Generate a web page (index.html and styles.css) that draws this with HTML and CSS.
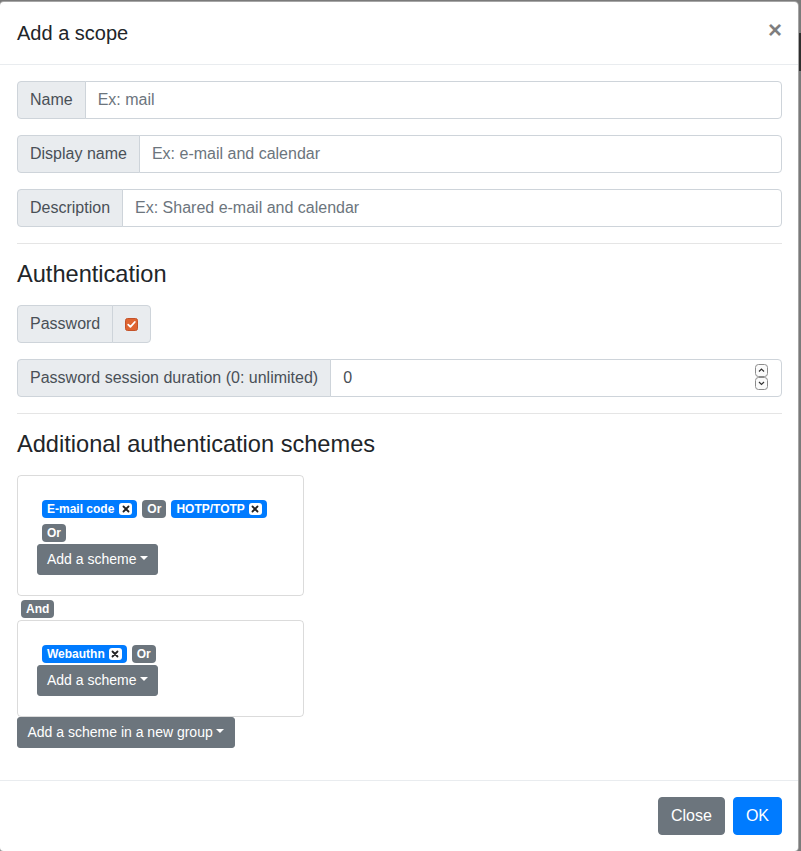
FILE: index.html
```html
<!DOCTYPE html>
<html lang="en">
<head>
<meta charset="utf-8">
<title>Add a scope</title>
<link rel="stylesheet" href="styles.css">
</head>
<body>
<div class="underlay-bar"></div>
<div class="modal">
  <div class="modal-header">
    <h5 class="modal-title">Add a scope</h5>
    <button class="close" type="button">×</button>
  </div>
  <div class="modal-body">
    <div class="input-group">
      <span class="addon">Name</span>
      <input class="form-control" placeholder="Ex: mail">
    </div>
    <div class="input-group">
      <span class="addon">Display name</span>
      <input class="form-control" placeholder="Ex: e-mail and calendar">
    </div>
    <div class="input-group">
      <span class="addon">Description</span>
      <input class="form-control" placeholder="Ex: Shared e-mail and calendar">
    </div>
    <hr>
    <h4 class="section-title">Authentication</h4>
    <div class="input-group">
      <span class="addon">Password</span>
      <span class="addon addon-check">
        <svg class="checkbox" width="13" height="13" viewBox="0 0 13 13"><rect x="0.5" y="0.5" width="12" height="12" rx="2" fill="#df6431" stroke="#c4532a"/><path d="M3.2 6.6 L5.4 8.8 L9.8 4" fill="none" stroke="#fff" stroke-width="1.8" stroke-linecap="round" stroke-linejoin="round"/></svg>
      </span>
    </div>
    <div class="input-group">
      <span class="addon">Password session duration (0: unlimited)</span>
      <div class="num-wrap">
        <input class="form-control num" value="0">
        <svg class="spinner" width="14" height="27" viewBox="0 0 14 27"><rect x="0.5" y="0.5" width="12" height="12" rx="3" fill="#fbfbfb" stroke="#8c8c8c"/><path d="M4 7.5 L6.5 5 L9 7.5" fill="none" stroke="#333" stroke-width="1.2"/><rect x="0.5" y="13.5" width="12" height="12" rx="3" fill="#fbfbfb" stroke="#8c8c8c"/><path d="M4 18 L6.5 20.5 L9 18" fill="none" stroke="#333" stroke-width="1.2"/></svg>
      </div>
    </div>
    <hr>
    <h4 class="section-title">Additional authentication schemes</h4>
    <div class="schemes">
      <div class="scheme-group">
        <div class="badges">
          <span class="badge badge-primary badge-wide">E-mail code <span class="badge-x"><svg width="8" height="8" viewBox="0 0 8 8"><path d="M1.5 1.5 L6.5 6.5 M6.5 1.5 L1.5 6.5" stroke="#222" stroke-width="1.8" stroke-linecap="round"/></svg></span></span>
          <span class="badge badge-secondary">Or</span>
          <span class="badge badge-primary">HOTP/TOTP <span class="badge-x"><svg width="8" height="8" viewBox="0 0 8 8"><path d="M1.5 1.5 L6.5 6.5 M6.5 1.5 L1.5 6.5" stroke="#222" stroke-width="1.8" stroke-linecap="round"/></svg></span></span>
          <span class="badge badge-secondary">Or</span>
        </div>
        <button class="btn btn-sm btn-secondary dropdown-toggle" type="button">Add a scheme</button>
      </div>
      <span class="badge badge-secondary and-badge">And</span>
      <div class="scheme-group">
        <div class="badges">
          <span class="badge badge-primary">Webauthn <span class="badge-x"><svg width="8" height="8" viewBox="0 0 8 8"><path d="M1.5 1.5 L6.5 6.5 M6.5 1.5 L1.5 6.5" stroke="#222" stroke-width="1.8" stroke-linecap="round"/></svg></span></span>
          <span class="badge badge-secondary">Or</span>
        </div>
        <button class="btn btn-sm btn-secondary dropdown-toggle" type="button">Add a scheme</button>
      </div>
      <button class="btn btn-sm btn-secondary dropdown-toggle new-group" type="button">Add a scheme in a new group</button>
    </div>
  </div>
  <div class="modal-footer">
    <button class="btn btn-secondary" type="button">Close</button>
    <button class="btn btn-primary" type="button">OK</button>
  </div>
</div>
</body>
</html>
```
FILE: styles.css
```css
* { box-sizing: border-box; }
html, body { margin: 0; padding: 0; }
body {
  background: #7a7a7a;
  font-family: "Liberation Sans", Arial, sans-serif;
  font-size: 16px;
  line-height: 1.5;
  color: #212529;
  overflow: hidden;
  height: 851px;
  position: relative;
}
.underlay-bar {
  position: absolute;
  right: 0;
  top: 33px;
  width: 10px;
  height: 38px;
  background: #2e2e2e;
}
.modal {
  position: relative;
  width: 800px;
  margin: 1px 0 0 -1px;
  background: #fff;
  border: 1px solid rgba(0,0,0,.35);
  border-radius: 4.8px;
}
.modal-header {
  display: flex;
  align-items: flex-start;
  justify-content: space-between;
  padding: 16px 16px 16px 17px;
  border-bottom: 1px solid #e9ecef;
}
.modal-title {
  margin: 0;
  font-size: 20px;
  font-weight: 500;
  line-height: 1.5;
}
.close {
  padding: 16px;
  margin: -16px -16px -16px auto;
  background: transparent;
  border: 0;
  font-family: inherit;
  font-size: 24px;
  font-weight: 700;
  line-height: 1;
  color: #000;
  opacity: .5;
  text-shadow: 0 1px 0 #fff;
  cursor: pointer;
}
.modal-body {
  padding: 16px 16px 16px 17px;
}
.input-group {
  display: flex;
  align-items: stretch;
  margin-bottom: 16px;
}
.addon {
  display: flex;
  align-items: center;
  padding: 6px 12px;
  font-size: 16px;
  line-height: 24px;
  color: #495057;
  background: #e9ecef;
  border: 1px solid #ced4da;
  border-radius: 4px 0 0 4px;
  white-space: nowrap;
}
.addon-check {
  margin-left: -1px;
  border-radius: 0 4px 4px 0;
}
.checkbox { display: block; }
.form-control {
  flex: 1 1 auto;
  min-width: 0;
  margin-left: -1px;
  height: 38px;
  padding: 6px 12px;
  font-family: inherit;
  font-size: 16px;
  line-height: 24px;
  color: #495057;
  background: #fff;
  border: 1px solid #ced4da;
  border-radius: 0 4px 4px 0;
  outline: none;
}
.form-control::placeholder { color: #6c757d; opacity: 1; }
.num-wrap {
  position: relative;
  flex: 1 1 auto;
  display: flex;
  margin-left: -1px;
}
.num-wrap .form-control { margin-left: 0; }
.spinner {
  position: absolute;
  right: 13px;
  top: 5px;
}
hr {
  margin: 0 0 16px;
  border: 0;
  border-top: 1px solid rgba(0,0,0,.1);
}
.section-title {
  margin: 0 0 16px;
  font-size: 23.6px;
  font-weight: 500;
  line-height: 29px;
}
.schemes {
  display: flex;
  flex-direction: column;
  align-items: flex-start;
  padding-bottom: 16px;
}
.scheme-group {
  width: 287px;
  padding: 24px 19px 20px 19px;
  border: 1px solid rgba(0,0,0,.14);
  border-radius: 4px;
}
.badges {
  display: flex;
  flex-wrap: wrap;
  column-gap: 5px;
  row-gap: 6px;
  margin-left: 5px;
  margin-bottom: 2px;
}
.badge {
  display: inline-flex;
  align-items: center;
  padding: 3px 5px;
  font-size: 12px;
  font-weight: 700;
  line-height: 12px;
  color: #fff;
  border-radius: 4px;
  white-space: nowrap;
}
.badge-primary { background: #007bff; }
.badge-secondary { background: #6c757d; }
.badge-x {
  display: inline-flex;
  align-items: center;
  justify-content: center;
  width: 13px;
  height: 12px;
  margin-left: 4px;
  background: #fff;
  border-radius: 3px;
}
.badge-wide .badge-x { margin-left: 5px; }
.badge-x svg { display: block; }
.and-badge {
  margin: 4px 0 2px 4px;
}
.btn {
  display: inline-block;
  font-family: inherit;
  font-size: 16px;
  font-weight: 400;
  line-height: 24px;
  padding: 6px 12px;
  border: 1px solid transparent;
  border-radius: 4px;
  color: #fff;
  cursor: pointer;
  white-space: nowrap;
}
.btn-sm {
  font-size: 14px;
  line-height: 21px;
  padding: 4px 9px;
  border-radius: 3px;
}
.new-group { padding: 4px 9.5px; }
.btn-secondary { background: #6c757d; border-color: #6c757d; }
.btn-primary { background: #007bff; border-color: #007bff; }
.dropdown-toggle::after {
  content: "";
  display: inline-block;
  margin-left: .255em;
  vertical-align: .255em;
  border-top: .3em solid;
  border-right: .3em solid transparent;
  border-left: .3em solid transparent;
  border-bottom: 0;
}
.modal-footer {
  display: flex;
  justify-content: flex-end;
  align-items: center;
  padding: 12px;
  border-top: 1px solid #e9ecef;
}
.modal-footer .btn { margin: 4px; }
```
